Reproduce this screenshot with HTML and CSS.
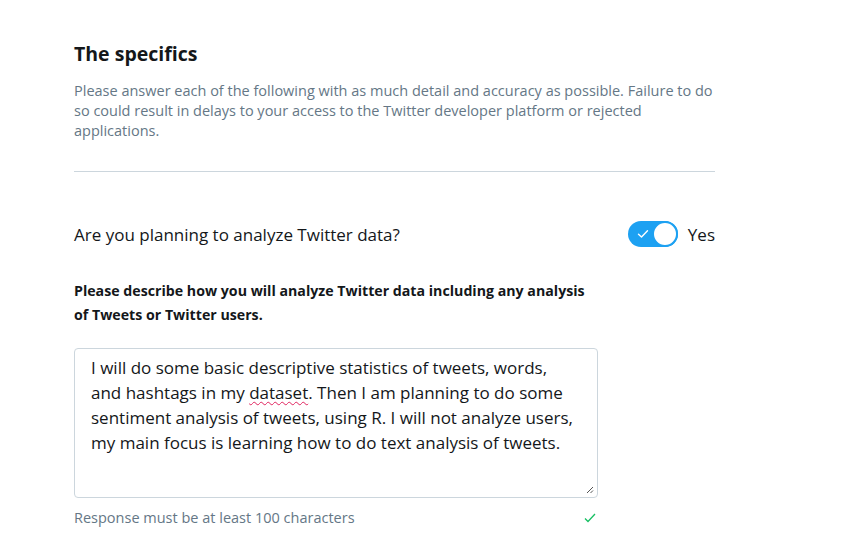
FILE: index.html
```html
<!DOCTYPE html>
<html>
<head>
<meta charset="utf-8">
<link rel="stylesheet" href="styles.css">
</head>
<body>
<div class="page">
  <h2 class="title">The specifics</h2>
  <p class="intro">Please answer each of the following with as much detail and accuracy as possible. Failure to do so could result in delays to your access to the Twitter developer platform or rejected applications.</p>
  <hr class="rule">
  <div class="question">
    <span class="q-text">Are you planning to analyze Twitter data?</span>
    <div class="toggle-wrap">
      <span class="toggle">
        <svg class="tick" width="12" height="10" viewBox="0 0 12 10"><path d="M1.5 5.2 L4.5 8 L10.5 1.8" fill="none" stroke="#fff" stroke-width="1.4" stroke-linecap="round" stroke-linejoin="round"/></svg>
        <span class="knob"></span>
      </span>
      <span class="yes">Yes</span>
    </div>
  </div>
  <div class="label">Please describe how you will analyze Twitter data including any analysis of Tweets or Twitter users.</div>
  <div class="textarea">
    <div class="ta-text">I will do some basic descriptive statistics of tweets, words,<br>and hashtags in my <span class="misspelt">dataset</span>. Then I am planning to do some<br>sentiment analysis of tweets, using R. I will not analyze users,<br>my main focus is learning how to do text analysis of tweets.</div>
    <svg class="grip" width="8" height="8" viewBox="0 0 8 8"><path d="M7 1 L1 7 M7 4.5 L4.5 7" stroke="#555" stroke-width="1"/></svg>
  </div>
  <div class="helper">
    <span>Response must be at least 100 characters</span>
    <svg class="ok" width="12" height="10" viewBox="0 0 12 10"><path d="M1 5.5 L4 8.5 L11 1" fill="none" stroke="#17bf63" stroke-width="1.3"/></svg>
  </div>
</div>
</body>
</html>
```
FILE: styles.css
```css
html, body {
  margin: 0;
  padding: 0;
  background: #fff;
}
body {
  font-family: "Open Sans", "Noto Sans", sans-serif;
  color: #14171a;
}
.page {
  width: 641px;
  padding: 40px 0 0 74px;
}
.title {
  margin: 0;
  font-size: 19.5px;
  font-weight: 700;
  line-height: 28px;
  color: #14171a;
}
.intro {
  margin: 13px 0 0;
  font-size: 14.5px;
  line-height: 20px;
  color: #657786;
}
.rule {
  border: 0;
  border-top: 1px solid #ccd6dd;
  margin: 30px 0 0;
  height: 0;
}
.question {
  margin-top: 48px;
  display: flex;
  align-items: center;
  justify-content: space-between;
  height: 28px;
}
.q-text {
  font-size: 17px;
}
.toggle-wrap {
  display: flex;
  align-items: center;
  gap: 10px;
}
.toggle {
  position: relative;
  display: flex;
  align-items: center;
  width: 50px;
  height: 26px;
  border-radius: 13px;
  background: #1da1f2;
  box-sizing: border-box;
}
.tick {
  margin-left: 9px;
}
.knob {
  position: absolute;
  right: 0;
  top: 0;
  width: 26px;
  height: 26px;
  border-radius: 50%;
  background: #fff;
  border: 2px solid #1da1f2;
  box-sizing: border-box;
}
.yes {
  font-size: 17px;
}
.label {
  margin-top: 31px;
  width: 524px;
  font-size: 14.2px;
  font-weight: 700;
  line-height: 24px;
}
.textarea {
  position: relative;
  margin-top: 21px;
  width: 524px;
  height: 150px;
  box-sizing: border-box;
  border: 1px solid #ccd6dd;
  border-radius: 4px;
  padding: 6px 16px;
}
.ta-text {
  font-size: 17px;
  line-height: 25px;
  color: #14171a;
  white-space: nowrap;
}
.misspelt {
  text-decoration: underline wavy #e0245e;
  text-decoration-thickness: 1px;
  text-underline-offset: 2px;
}
.grip {
  position: absolute;
  right: 3px;
  bottom: 3px;
}
.helper {
  width: 524px;
  margin-top: 10px;
  display: flex;
  justify-content: space-between;
  align-items: center;
  font-size: 14.5px;
  line-height: 20px;
  color: #657786;
}
.ok {
  margin-right: 2px;
}
```
